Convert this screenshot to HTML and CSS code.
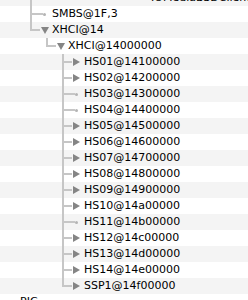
FILE: index.html
```html
<!DOCTYPE html>
<html>
<head>
    <title>IORegistry Tree</title>
    <link rel="stylesheet" href="styles.css">
</head>
<body>
    <div class="tree">
        <div class="row">
            <span class="cell pipe"></span>
            <span class="deep"></span>
            <span class="cell end"></span>
            <span class="twisty leaf"></span>
            <span class="label">IOMediaBSDClient</span>
        </div>
        <div class="row">
            <span class="cell tee"></span>
            <span class="twisty leaf"></span>
            <span class="label">SMBS@1F,3</span>
        </div>
        <div class="row">
            <span class="cell end"></span>
            <span class="twisty open"></span>
            <span class="label">XHCI@14</span>
        </div>
        <div class="row">
            <span class="cell"></span>
            <span class="cell end"></span>
            <span class="twisty open"></span>
            <span class="label">XHCI@14000000</span>
        </div>
        <div class="row">
            <span class="cell"></span><span class="cell"></span>
            <span class="cell tee"></span>
            <span class="twisty closed"></span>
            <span class="label">HS01@14100000</span>
        </div>
        <div class="row">
            <span class="cell"></span><span class="cell"></span>
            <span class="cell tee"></span>
            <span class="twisty closed"></span>
            <span class="label">HS02@14200000</span>
        </div>
        <div class="row">
            <span class="cell"></span><span class="cell"></span>
            <span class="cell tee"></span>
            <span class="twisty leaf"></span>
            <span class="label">HS03@14300000</span>
        </div>
        <div class="row">
            <span class="cell"></span><span class="cell"></span>
            <span class="cell tee"></span>
            <span class="twisty leaf"></span>
            <span class="label">HS04@14400000</span>
        </div>
        <div class="row">
            <span class="cell"></span><span class="cell"></span>
            <span class="cell tee"></span>
            <span class="twisty closed"></span>
            <span class="label">HS05@14500000</span>
        </div>
        <div class="row">
            <span class="cell"></span><span class="cell"></span>
            <span class="cell tee"></span>
            <span class="twisty closed"></span>
            <span class="label">HS06@14600000</span>
        </div>
        <div class="row">
            <span class="cell"></span><span class="cell"></span>
            <span class="cell tee"></span>
            <span class="twisty closed"></span>
            <span class="label">HS07@14700000</span>
        </div>
        <div class="row">
            <span class="cell"></span><span class="cell"></span>
            <span class="cell tee"></span>
            <span class="twisty closed"></span>
            <span class="label">HS08@14800000</span>
        </div>
        <div class="row">
            <span class="cell"></span><span class="cell"></span>
            <span class="cell tee"></span>
            <span class="twisty closed"></span>
            <span class="label">HS09@14900000</span>
        </div>
        <div class="row">
            <span class="cell"></span><span class="cell"></span>
            <span class="cell tee"></span>
            <span class="twisty closed"></span>
            <span class="label">HS10@14a00000</span>
        </div>
        <div class="row">
            <span class="cell"></span><span class="cell"></span>
            <span class="cell tee"></span>
            <span class="twisty leaf"></span>
            <span class="label">HS11@14b00000</span>
        </div>
        <div class="row">
            <span class="cell"></span><span class="cell"></span>
            <span class="cell tee"></span>
            <span class="twisty closed"></span>
            <span class="label">HS12@14c00000</span>
        </div>
        <div class="row">
            <span class="cell"></span><span class="cell"></span>
            <span class="cell tee"></span>
            <span class="twisty closed"></span>
            <span class="label">HS13@14d00000</span>
        </div>
        <div class="row">
            <span class="cell"></span><span class="cell"></span>
            <span class="cell tee"></span>
            <span class="twisty closed"></span>
            <span class="label">HS14@14e00000</span>
        </div>
        <div class="row">
            <span class="cell"></span><span class="cell"></span>
            <span class="cell end"></span>
            <span class="twisty closed"></span>
            <span class="label">SSP1@14f00000</span>
        </div>
        <div class="row top-level">
            <span class="label">PIC</span>
        </div>
    </div>
</body>
</html>
```

FILE: styles.css
```css
html, body {
    margin: 0;
    height: 300px;
    overflow: hidden;
    background: #fff;
}
.tree {
    margin-top: -10px;
    font-family: "DejaVu Sans", sans-serif;
    font-size: 11px;
    color: #000;
}
.row {
    display: flex;
    align-items: center;
    height: 16px;
    padding-left: 22px;
    white-space: nowrap;
    background: #fff;
}
.row:nth-child(odd) {
    background: #f4f4f4;
}
.row.top-level {
    padding-left: 20px;
}
.cell {
    flex: none;
    width: 16px;
    height: 16px;
}
.deep {
    flex: none;
    width: 83px;
}
/* tree guide lines */
.pipe {
    background: linear-gradient(#c6c6c6, #c6c6c6) 8px 0 / 2px 16px no-repeat;
}
.tee {
    background:
        linear-gradient(#c6c6c6, #c6c6c6) 8px 0 / 2px 16px no-repeat,
        linear-gradient(#c6c6c6, #c6c6c6) 10px 7px / 6px 2px no-repeat;
}
.end {
    background:
        linear-gradient(#c6c6c6, #c6c6c6) 8px 0 / 2px 9px no-repeat,
        linear-gradient(#c6c6c6, #c6c6c6) 10px 7px / 6px 2px no-repeat;
}
.twisty {
    flex: none;
    display: flex;
    align-items: center;
    width: 14px;
    height: 16px;
    background: linear-gradient(#c6c6c6, #c6c6c6) 0 7px / 2px 2px no-repeat;
}
.twisty.closed::after {
    content: "";
    margin-left: 3px;
    border-left: 7px solid #858585;
    border-top: 4px solid transparent;
    border-bottom: 4px solid transparent;
}
.twisty.open::after {
    content: "";
    margin-left: 3px;
    border-top: 7px solid #858585;
    border-left: 4px solid transparent;
    border-right: 4px solid transparent;
}
.twisty.leaf {
    background: linear-gradient(#c6c6c6, #c6c6c6) 0 7px / 5px 2px no-repeat;
}
.twisty.leaf::after {
    content: "";
    width: 3px;
    height: 3px;
    margin-left: 5px;
    border-radius: 50%;
    background: #b4b4b4;
}
.label {
    line-height: 16px;
}
```
